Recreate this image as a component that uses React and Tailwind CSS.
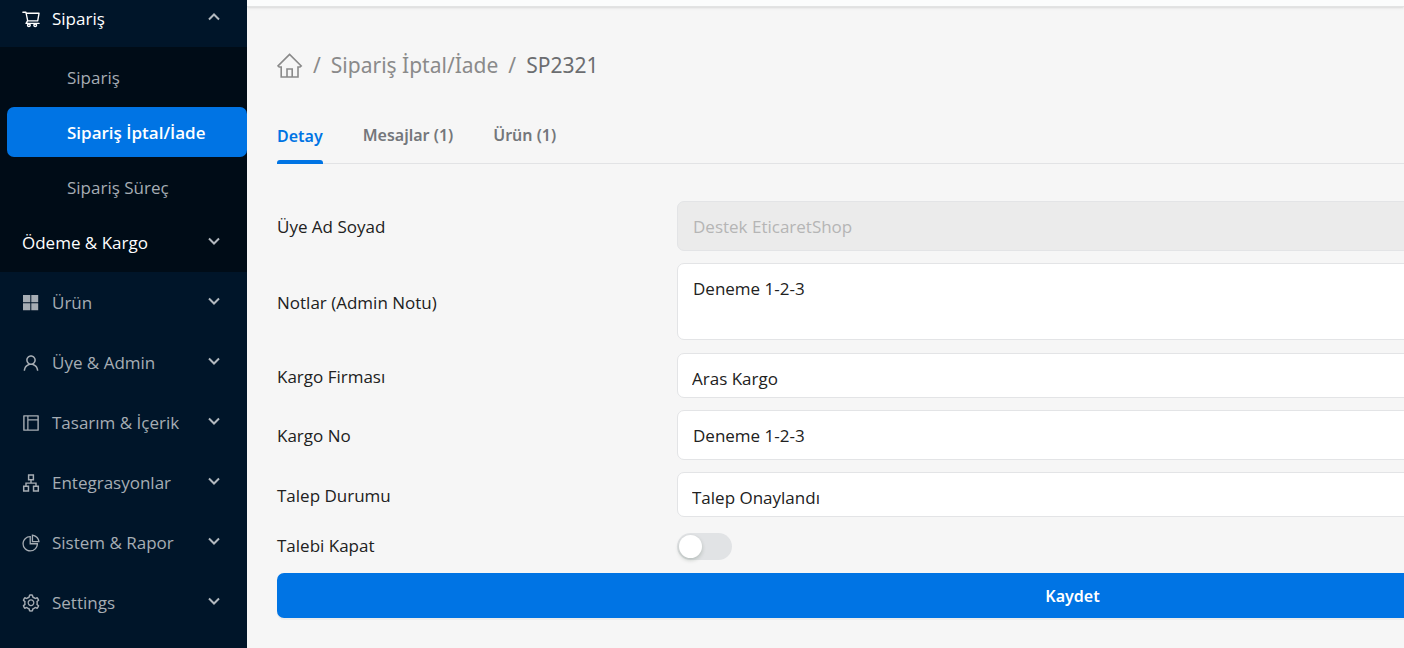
import {
  AiOutlineShoppingCart,
  AiOutlineUser,
  AiOutlineLayout,
  AiOutlineApartment,
  AiOutlinePieChart,
  AiOutlineSetting,
} from "react-icons/ai";

function TilesIcon({ className }) {
  return (
    <svg viewBox="0 0 20 20" className={className} fill="currentColor" aria-hidden="true">
      <path d="M2 2h7.3v7.3H2zM10.3 2h6.9v7.3h-6.9zM2 10.3h7.3v7H2zM10.3 10.3h6.9v7h-6.9z" />
    </svg>
  );
}

function HomeIcon({ className }) {
  return (
    <svg viewBox="0 0 26 26" className={className} fill="none" stroke="currentColor" strokeWidth="1.6" aria-hidden="true">
      <path d="M12.6 1.4 1 12.9 2.2 14h2V24h16.8V14h2l1.2-1.1z" />
      <path d="M10 24v-8h5.2v8" />
    </svg>
  );
}

const sections = [
  { label: "Ürün", Icon: TilesIcon },
  { label: "Üye & Admin", Icon: AiOutlineUser },
  { label: "Tasarım & İçerik", Icon: AiOutlineLayout },
  { label: "Entegrasyonlar", Icon: AiOutlineApartment },
  { label: "Sistem & Rapor", Icon: AiOutlinePieChart },
  { label: "Settings", Icon: AiOutlineSetting },
];

function Chevron({ up = false }) {
  return (
    <svg
      viewBox="0 0 12 8"
      className="mb-1 ml-auto h-2 w-3 shrink-0"
      fill="none"
      stroke="#b3b9bf"
      strokeWidth="2"
      aria-hidden="true"
    >
      <path d={up ? "M1 6.5 6 1.5 11 6.5" : "M1 1.5 6 6.5 11 1.5"} />
    </svg>
  );
}

function Sidebar() {
  return (
    <nav className="flex w-[247px] shrink-0 flex-col bg-[#001529] text-[17px] text-[#a6adb4]">
      <button type="button" className="flex h-[47px] items-center pr-[27px] pb-[10px] pl-[21px] text-white">
        <AiOutlineShoppingCart className="mr-[11px] size-5" />
        Sipariş
        <Chevron up />
      </button>
      <div className="flex flex-col gap-[5px] bg-[#000c17] py-[5px]">
        <a href="#siparis" className="flex h-[50px] items-center pt-[2px] pl-[67px]">
          Sipariş
        </a>
        <a
          href="#iptal-iade"
          aria-current="page"
          className="ml-[7px] flex h-[50px] items-center rounded-[7px] bg-[#0074e4] pt-[2px] pl-[60px] font-semibold text-white"
        >
          Sipariş İptal/İade
        </a>
        <a href="#surec" className="flex h-[50px] items-center pt-[2px] pl-[67px]">
          Sipariş Süreç
        </a>
        <button type="button" className="flex h-[50px] items-center pt-[2px] pr-[27px] pl-[22px] text-white">
          Ödeme &amp; Kargo
          <Chevron />
        </button>
      </div>
      <div className="flex flex-col gap-[10px] py-[5px]">
        {sections.map(({ label, Icon }) => (
          <button key={label} type="button" className="flex h-[50px] items-center pt-[2px] pr-[27px] pl-[21px]">
            <Icon className="mr-[11px] size-5" />
            {label}
            <Chevron />
          </button>
        ))}
      </div>
    </nav>
  );
}

function Field({ id, label, children }) {
  return (
    <div className="flex items-center">
      <label htmlFor={id} className="w-[400px] shrink-0 pt-[2px]">
        {label}
      </label>
      {children}
    </div>
  );
}

const box = "min-w-0 flex-1 rounded-[7px] border border-[#e3e4e6] bg-white";

export default function App() {
  return (
    <div className="flex min-h-screen overflow-hidden bg-[#f6f6f6] font-['Open_Sans','Noto_Sans',sans-serif] text-[17px] text-[#212121]">
      <Sidebar />
      <main className="min-w-0 flex-1 overflow-hidden">
        <div className="h-[7px] border-b border-[#e2e3e3] bg-[#fbfcfc] shadow-sm" />
        <div className="min-w-[1651px] px-[30px]">
          <nav
            aria-label="Breadcrumb"
            className="mt-[43px] flex h-8 items-center gap-[10px] font-['Noto_Sans',sans-serif] text-[21px] text-[#8a8a8a]"
          >
            <a href="#home" aria-label="Ana sayfa">
              <HomeIcon className="size-[26px]" />
            </a>
            <span>/</span>
            <a href="#iptal-iade">Sipariş İptal/İade</a>
            <span>/</span>
            <span className="text-[#6b6d70]">SP2321</span>
          </nav>

          <div
            role="tablist"
            className="mt-[25px] flex h-[57px] gap-10 border-b border-[#e2e3e5] font-['Noto_Sans',sans-serif] text-base font-semibold text-[#74777b]"
          >
            <button type="button" role="tab" aria-selected="true" className="-mb-px flex flex-col text-[#0074e4]">
              <span className="flex flex-1 items-center pt-1">Detay</span>
              <span className="h-1 w-full rounded-t-[3px] bg-[#0074e4]" />
            </button>
            <button type="button" role="tab" aria-selected="false">
              Mesajlar (1)
            </button>
            <button type="button" role="tab" aria-selected="false">
              Ürün (1)
            </button>
          </div>

          <form className="mt-[37px] flex flex-col gap-3" onSubmit={(e) => e.preventDefault()}>
            <Field id="member" label="Üye Ad Soyad">
              <input
                id="member"
                disabled
                defaultValue="Destek EticaretShop"
                className="h-[50px] min-w-0 flex-1 rounded-[7px] border border-[#e3e4e6] bg-[#ebebeb] px-[15px] text-[#b5b5b5]"
              />
            </Field>
            <Field id="notes" label="Notlar (Admin Notu)">
              <textarea id="notes" defaultValue="Deneme 1-2-3" className={`${box} mb-px h-[77px] resize-none px-[15px] py-3`} />
            </Field>
            <Field id="carrier" label="Kargo Firması">
              <select id="carrier" className={`${box} h-[45px] appearance-none px-[14px] pt-[6px]`}>
                <option>Aras Kargo</option>
              </select>
            </Field>
            <Field id="tracking" label="Kargo No">
              <input id="tracking" defaultValue="Deneme 1-2-3" className={`${box} h-[50px] px-[15px]`} />
            </Field>
            <Field id="status" label="Talep Durumu">
              <select id="status" className={`${box} h-[45px] appearance-none px-[14px] pt-[6px]`}>
                <option>Talep Onaylandı</option>
              </select>
            </Field>
            <div className="flex h-8 items-center pt-[2px]">
              <label htmlFor="close" className="w-[400px] shrink-0">
                Talebi Kapat
              </label>
              <input
                id="close"
                type="checkbox"
                role="switch"
                className="h-[27px] w-[55px] appearance-none rounded-full bg-[#e1e3e5] p-[2px] before:block before:size-[23px] before:rounded-full before:bg-white before:shadow-[0_2px_4px_rgba(0,35,11,0.2)] checked:bg-[#0074e4] checked:before:ml-auto"
              />
            </div>
            <button
              type="submit"
              className="h-[45px] rounded-[7px] bg-[#0074e4] font-['Noto_Sans',sans-serif] text-base font-semibold text-white shadow-[0_2px_0_rgba(0,0,0,0.04)]"
            >
              Kaydet
            </button>
          </form>
        </div>
      </main>
    </div>
  );
}
